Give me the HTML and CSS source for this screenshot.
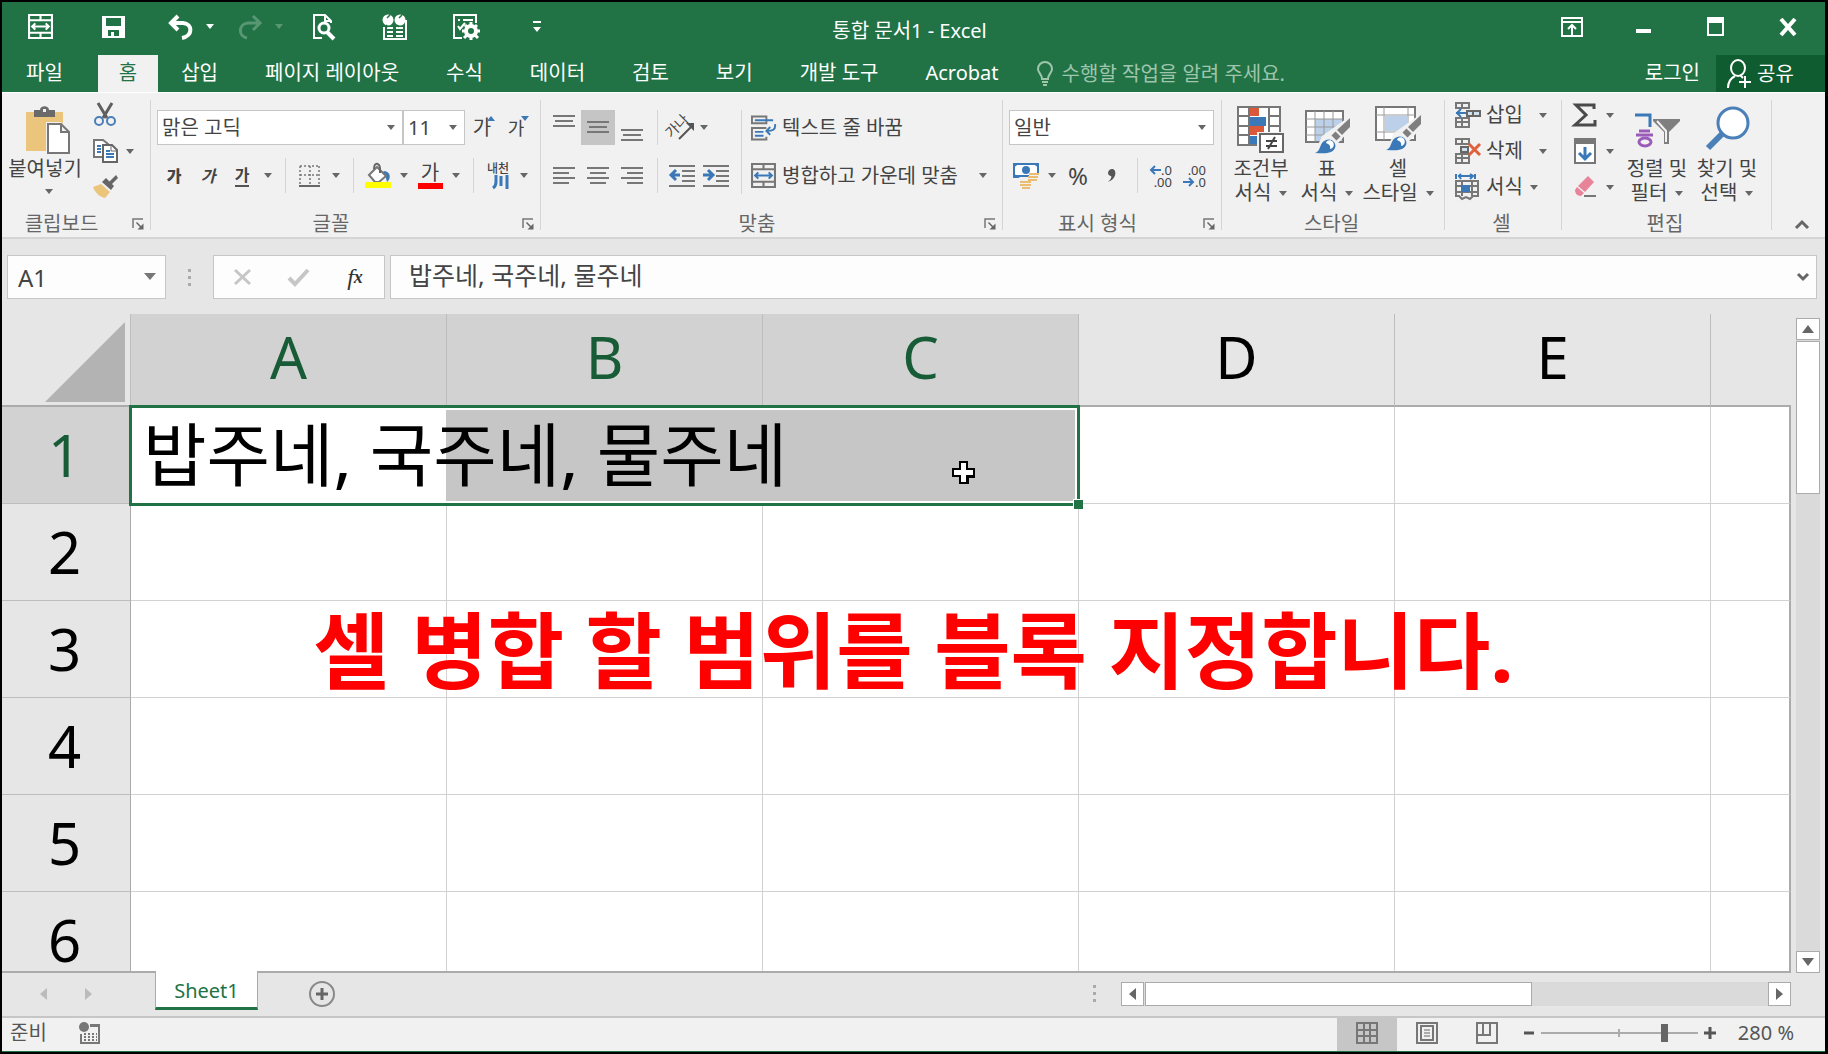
FILE: index.html
```html
<!DOCTYPE html>
<html lang="ko">
<head>
	<meta charset="utf-8">
	<title>통합 문서1 - Excel</title>
	<link rel="stylesheet" href="styles.css">
</head>
<body>

<svg class="defs" aria-hidden="true">
	<symbol id="merge" viewBox="0 0 24 24">
		<path class="line" d="M1 1h22v22H1zM1 6h22M1 18h22M12 1v5M12 18v5"/>
		<path class="accent" d="M4 12h16M7 9l-3 3 3 3M17 9l3 3-3 3"/>
	</symbol>
	<symbol id="launcher" viewBox="0 0 12 12">
		<path d="M1 10V1h10" fill="none" stroke="#777" stroke-width="1.5"/>
		<path d="M4.500 4.500l5 5" stroke="#666" stroke-width="1.500"/>
		<path d="M11.500 5.500v6h-6z" fill="#666"/>
	</symbol>
	<symbol id="brush" viewBox="0 0 36 36">
		<path d="M35 0v9l-8 8-5-5z" fill="#7f7f7f"/>
		<path d="M20.500 13.500l5 5-4 4-5-5z" fill="#7f7f7f"/>
		<path d="M0 35c5-2 4-5 7-10 3-4 9-5 12-1s1 8-3 10c-5 2-10 1-16 1z" fill="#3b78b8"/>
		<path d="M11 25c0-3 5-4 7-1s0 7-3 7c1-3-1-5-4-6z" fill="#fff"/>
	</symbol>
</svg>

<div class="window">

	<header class="titlebar">
		<div class="quick">
			<button class="q1" aria-label="병합하고 가운데 맞춤"><svg width="25" height="25"><use href="#merge"/></svg></button>
			<button class="q2" aria-label="저장"><svg width="23" height="22" viewBox="0 0 23 22"><path d="M0 0h23v22H0zM4 2v8h15V2zM6 14v6h3v-4h3v4h5v-6z" fill="#fff" fill-rule="evenodd"/></svg></button>
			<button class="q3" aria-label="실행 취소"><svg width="24" height="24" viewBox="0 0 24 24"><path d="M9 1L2 8l7 7M3 8h11c10 1 10 13-1 15" fill="none" stroke="#fff" stroke-width="4"/></svg><i class="caret"></i></button>
			<button class="q4" aria-label="다시 실행" disabled><svg width="24" height="24" viewBox="0 0 24 24"><path d="M15 1l7 7-7 7M21 8H10C0 9 0 21 9 23" fill="none" stroke="#fff" stroke-width="3"/></svg><i class="caret"></i></button>
			<button class="q5" aria-label="인쇄 미리 보기"><svg width="22" height="26" viewBox="0 0 22 26"><path d="M9 24H1V1h11l6 6v2M12 1v6h6" fill="none" stroke="#fff" stroke-width="2"/><circle cx="11" cy="14" r="5" fill="none" stroke="#fff" stroke-width="3"/><path d="M14 18l7 7" stroke="#fff" stroke-width="4"/></svg></button>
			<button class="q6" aria-label="찾기 및 확인"><svg width="26" height="26" viewBox="0 0 26 26"><path d="M2 13v12h22V6M5 14h6M14 14h7M5 18h6M14 18h7M5 22h6M14 22h7" fill="none" stroke="#fff" stroke-width="2"/><circle cx="6" cy="6" r="5.500" fill="#fff"/><circle cx="18" cy="6" r="5.500" fill="#fff"/><path d="M5 4l3-3M17 4l3-3M4 11l2 2M15 11l2 2" stroke="#217346" stroke-width="1.500"/></svg></button>
			<button class="q7" aria-label="옵션"><svg width="27" height="26" viewBox="0 0 27 26"><path d="M9 24H1V1h22v8M5 6h2M10 6h10M5 12l2 3 5-6" fill="none" stroke="#fff" stroke-width="2"/><circle cx="18" cy="17" r="5" fill="none" stroke="#fff" stroke-width="4"/><path d="M18 8v4M18 22v4M9 17h4M23 17h4M12 11l2 2M22 21l3 3M24 11l-2 2M14 21l-3 3" stroke="#fff" stroke-width="3"/></svg></button>
			<button class="q8" aria-label="빠른 실행 도구 모음 사용자 지정"><svg width="8" height="12" viewBox="0 0 8 12"><path d="M0 0h8v2H0zM0 6h8l-4 5z" fill="#fff"/></svg></button>
		</div>
		<h1>통합 문서1 - Excel</h1>
		<div class="controls">
			<button aria-label="리본 메뉴 표시 옵션"><svg width="22" height="20" viewBox="0 0 22 20"><path d="M1 1h20v18H1zM1 5h20M11 18V9M7 12l4-4 4 4" fill="none" stroke="#fff" stroke-width="2"/></svg></button>
			<button aria-label="최소화"><svg width="16" height="20" viewBox="0 0 16 20"><path d="M0 12h15v4H0z" fill="#fff"/></svg></button>
			<button aria-label="최대화"><svg width="18" height="20" viewBox="0 0 18 20"><path d="M1 1h15v17H1z" fill="none" stroke="#fff" stroke-width="2"/><path d="M0 0h17v6H0z" fill="#fff"/></svg></button>
			<button aria-label="닫기"><svg width="18" height="20" viewBox="0 0 18 20"><path d="M2 2l14 16M16 2L2 18" stroke="#fff" stroke-width="4"/></svg></button>
		</div>
	</header>

	<nav class="tabs">
		<a class="file" href="#">파일</a>
		<a class="active" href="#">홈</a>
		<a href="#">삽입</a>
		<a href="#">페이지 레이아웃</a>
		<a href="#">수식</a>
		<a href="#">데이터</a>
		<a href="#">검토</a>
		<a href="#">보기</a>
		<a href="#">개발 도구</a>
		<a href="#">Acrobat</a>
		<label class="tellme">
			<svg width="16" height="25" viewBox="0 0 16 25"><path d="M5 18c0-5-4-6-4-10a7 7 0 0 1 14 0c0 4-4 5-4 10zM5 21h6M6 24h4" fill="none" stroke="#9fc5ad" stroke-width="2"/></svg>
			<input type="text" placeholder="수행할 작업을 알려 주세요.">
		</label>
		<a class="login" href="#">로그인</a>
		<button class="share"><svg width="24" height="30" viewBox="0 0 24 30"><ellipse cx="11" cy="9" rx="7" ry="8" fill="none" stroke="#fff" stroke-width="2"/><path d="M1 29c0-6 3-10 7-12M13 16l3 3M18 17v12M12 23h12" fill="none" stroke="#fff" stroke-width="2"/></svg>공유</button>
	</nav>

	<div class="ribbon">

		<section class="group clipboard">
			<div class="body">
				<button class="big">
					<svg width="48" height="48" viewBox="0 0 48 48"><path d="M1 6h37v39H1z" fill="#ecc57c"/><path d="M9 4h6c0-5 9-5 9 0h6v7H9z" fill="#6a6a6a"/><path d="M18 3h3v3h-3z" fill="#f1f1f1"/><path d="M21 16h15l9 9v23H21z" fill="#f1f1f1"/><path d="M23 18h13l8 8v21H23zM36 18v8h8" fill="#fff" stroke="#777" stroke-width="2"/></svg>
					<span>붙여넣기</span>
					<i class="caret"></i>
				</button>
				<div class="stack">
					<button aria-label="잘라내기"><svg width="24" height="24" viewBox="0 0 24 24"><path d="M5 0l9 15M19 0l-9 15" stroke="#5f5f5f" stroke-width="3"/><circle cx="6" cy="18" r="4" fill="none" stroke="#4a7fb8" stroke-width="2"/><circle cx="18" cy="18" r="4" fill="none" stroke="#4a7fb8" stroke-width="2"/></svg></button>
					<button aria-label="복사"><svg width="26" height="24" viewBox="0 0 26 24"><path d="M1 1h9l5 4v13H1z" fill="#fff" stroke="#777" stroke-width="2"/><path d="M4 7h4M4 10h4M4 13h4" stroke="#3b78b8" stroke-width="2"/><path d="M10 6h9l5 5v12H10z" fill="#fff" stroke="#666" stroke-width="2"/><path d="M18 6v6h6" fill="none" stroke="#666"/><path d="M13 12h4M13 15h8M13 18h8" stroke="#3b78b8" stroke-width="2"/></svg><i class="caret"></i></button>
					<button aria-label="서식 복사"><svg width="26" height="24" viewBox="0 0 26 24"><path d="M0 12l8-3 9 8-5 6c-5-1-10-5-12-11z" fill="#ecc57c"/><path d="M9 7l4-4 8 8-3 4z" fill="#666"/><path d="M16 7l7-7 2 3-7 7z" fill="#666"/></svg></button>
				</div>
			</div>
			<footer><h2>클립보드</h2><button aria-label="클립보드 옵션"><svg width="12" height="12"><use href="#launcher"/></svg></button></footer>
		</section>

		<section class="group font">
			<div class="body rows">
				<div class="row">
					<label class="combo name"><select aria-label="글꼴"><option>맑은 고딕</option></select></label>
					<label class="combo size"><select aria-label="글꼴 크기"><option>11</option></select></label>
					<button class="tool grow" aria-label="글꼴 크기 크게">가<i class="up"></i></button>
					<button class="tool grow small" aria-label="글꼴 크기 작게">가<i class="down"></i></button>
				</div>
				<div class="row">
					<button class="tool bold">가</button>
					<button class="tool italic">가</button>
					<button class="tool underline"><span>가</span></button>
					<button class="drop" aria-label="밑줄 옵션"><i class="caret"></i></button>
					<i class="sep"></i>
					<button class="tool" aria-label="테두리"><svg width="22" height="22" viewBox="0 0 22 22"><path d="M1 1h20M1 10h20M1 1v18M11 1v18M20 1v18" fill="none" stroke="#777" stroke-width="1.500" stroke-dasharray="2 2"/><path d="M0 21h21" stroke="#666" stroke-width="2"/></svg></button>
					<button class="drop" aria-label="테두리 옵션"><i class="caret"></i></button>
					<i class="sep"></i>
					<button class="tool" aria-label="채우기 색"><svg width="26" height="26" viewBox="0 0 26 26"><path d="M20 8c7 2 5 9 2 11-1-4-2-8-5-10z" fill="#3b78b8"/><path d="M4 12l8-8 9 9-7 6h-4z" fill="#fff" stroke="#777" stroke-width="2"/><path d="M9 6c0-8 6-6 6 0v4" fill="none" stroke="#666" stroke-width="2"/><path d="M0 19h26v6H0z" fill="#ff0"/></svg></button>
					<button class="drop" aria-label="채우기 색 옵션"><i class="caret"></i></button>
					<button class="tool color" aria-label="글꼴 색"><span>가</span></button>
					<button class="drop" aria-label="글꼴 색 옵션"><i class="caret"></i></button>
					<i class="sep"></i>
					<button class="tool hanja" aria-label="윗주 필드 표시"><span>내천</span><svg width="16" height="14" viewBox="0 0 16 14"><path d="M3 0v7q0 4-3 6M8 1v10M14 0v14" fill="none" stroke="#3b78b8" stroke-width="3"/></svg></button>
					<button class="drop" aria-label="윗주 옵션"><i class="caret"></i></button>
				</div>
			</div>
			<footer><h2>글꼴</h2><button aria-label="글꼴 옵션"><svg width="12" height="12"><use href="#launcher"/></svg></button></footer>
		</section>

		<section class="group align">
			<div class="body">
				<div class="rows">
					<div class="row">
						<button class="tool" aria-label="위쪽 맞춤"><svg width="22" height="26" viewBox="0 0 22 26"><path class="line" d="M0 1h22M2 6h18M0 11h22"/></svg></button>
						<button class="tool on" aria-label="가운데 맞춤"><svg width="22" height="26" viewBox="0 0 22 26"><path class="line" d="M0 7h22M2 12h18M0 17h22"/></svg></button>
						<button class="tool" aria-label="아래쪽 맞춤"><svg width="22" height="26" viewBox="0 0 22 26"><path class="line" d="M0 15h22M2 20h18M0 25h22"/></svg></button>
						<i class="sep"></i>
						<button class="tool orient" aria-label="방향"><span>가나</span><svg width="26" height="26" viewBox="0 0 26 26"><path d="M10 24L24 10" stroke="#555" stroke-width="2"/><path d="M25 8v8l-8-8z" fill="#555"/></svg></button>
						<button class="drop tight" aria-label="방향 옵션"><i class="caret"></i></button>
					</div>
					<div class="row">
						<button class="tool" aria-label="왼쪽 맞춤"><svg width="22" height="18" viewBox="0 0 22 18"><path class="line" d="M0 1h22M0 6h16M0 11h22M0 16h16"/></svg></button>
						<button class="tool" aria-label="가운데"><svg width="22" height="18" viewBox="0 0 22 18"><path class="line" d="M0 1h22M3 6h16M0 11h22M3 16h16"/></svg></button>
						<button class="tool" aria-label="오른쪽 맞춤"><svg width="22" height="18" viewBox="0 0 22 18"><path class="line" d="M0 1h22M6 6h16M0 11h22M6 16h16"/></svg></button>
						<i class="sep"></i>
						<button class="tool" aria-label="내어쓰기"><svg width="26" height="22" viewBox="0 0 26 22"><path class="line" d="M0 1h26M13 6h13M13 11h13M13 16h13M0 21h26"/><path d="M2 10h9M7 5l-5 5 5 5" fill="none" stroke="#3b78b8" stroke-width="3"/></svg></button>
						<button class="tool" aria-label="들여쓰기"><svg width="26" height="22" viewBox="0 0 26 22"><path class="line" d="M0 1h26M13 6h13M13 11h13M13 16h13M0 21h26"/><path d="M0 10h9M5 5l5 5-5 5" fill="none" stroke="#3b78b8" stroke-width="3"/></svg></button>
					</div>
				</div>
				<i class="sep tall"></i>
				<div class="rows wide">
					<div class="row">
						<button class="labelled"><svg width="25" height="26" viewBox="0 0 26 26"><path class="line" d="M1 1h15v7H1zM16 13H1v12h15v-3"/><path class="accent" d="M4 5h19M4 17h9M4 21h9M25 9c1 6-3 7-8 7M20 12l-4 4 4 4"/></svg>텍스트 줄 바꿈</button>
					</div>
					<div class="row">
						<button class="labelled"><svg width="25" height="25"><use href="#merge"/></svg>병합하고 가운데 맞춤</button>
						<button class="drop last" aria-label="병합 옵션"><i class="caret"></i></button>
					</div>
				</div>
			</div>
			<footer><h2>맞춤</h2><button aria-label="맞춤 옵션"><svg width="12" height="12"><use href="#launcher"/></svg></button></footer>
		</section>

		<section class="group number">
			<div class="body rows">
				<div class="row">
					<label class="combo format"><select aria-label="표시 형식"><option>일반</option></select></label>
				</div>
				<div class="row">
					<button class="tool" aria-label="회계 표시 형식"><svg width="26" height="26" viewBox="0 0 26 26"><path d="M1 1h24v12H1z" fill="#fff" stroke="#3b78b8" stroke-width="2"/><path d="M0 0h7L0 5zM26 0h-7l7 5zM0 15h7l-7-5z" fill="#3b78b8"/><circle cx="13" cy="7" r="4" fill="#3b78b8"/><path d="M16 11h10v5H16zM7 18h10v5H7z" fill="#f1f1f1"/><path d="M16 11h10M15 14h10M15 17h9M7 19h11M7 22h11M9 25h8" stroke="#ecbd70" stroke-width="2"/></svg></button>
					<button class="drop" aria-label="회계 옵션"><i class="caret"></i></button>
					<button class="tool percent">%</button>
					<button class="tool comma" aria-label="쉼표 스타일"><svg width="8" height="14" viewBox="0 0 8 14"><path d="M4 0c5 0 5 10-4 13 3-3 4-5 3-6-5-1-3-7 1-7z" fill="#555"/></svg></button>
					<i class="sep"></i>
					<button class="tool decimal" aria-label="자릿수 늘림"><span><svg width="12" height="10" viewBox="0 0 12 10"><path d="M2 5h10M6 1L2 5l4 4" fill="none" stroke="#3b78b8" stroke-width="2"/></svg>.0</span><span>.00</span></button>
					<button class="tool decimal" aria-label="자릿수 줄임"><span>.00</span><span><svg width="12" height="10" viewBox="0 0 12 10"><path d="M0 5h10M6 1l4 4-4 4" fill="none" stroke="#3b78b8" stroke-width="2"/></svg>.0</span></button>
				</div>
			</div>
			<footer><h2>표시 형식</h2><button aria-label="표시 형식 옵션"><svg width="12" height="12"><use href="#launcher"/></svg></button></footer>
		</section>

		<section class="group styles">
			<div class="body">
				<button class="big">
					<svg width="48" height="48" viewBox="0 0 48 48"><path d="M1 1h42v38H1z" fill="#fff"/><path d="M13 1h9v9h-9zM13 20h14v9H13z" fill="#d9593a"/><path d="M13 11h16v9H13zM13 30h10v9H13z" fill="#3b78b8"/><path d="M1 1h42v38H1zM12 1v38M32 1v38M1 10h11M1 20h11M1 29h11M32 10h11M32 20h11" class="line"/><path d="M20 26h28v22H20z" fill="#f1f1f1"/><path d="M23 28h23v18H23z" fill="#fff" stroke="#666" stroke-width="2"/><path d="M29 35h11M29 40h11M38 31l-7 12" stroke="#444" stroke-width="2"/></svg>
					<span>조건부</span>
					<span>서식<i class="caret"></i></span>
				</button>
				<button class="big">
					<svg width="48" height="48" viewBox="0 0 48 48"><path d="M3 5h37v31H3z" fill="#fff"/><path d="M12 13h28v23H12z" fill="#bdd0e9"/><path d="M3 5h37v31H3z" class="line"/><path d="M12 5v31M21 5v31M30 5v31M3 13h37M3 21h37M3 29h37" fill="none" stroke="#999"/><path d="M11 48l8-18 28-20v14L26 47z" fill="#f1f1f1"/><use href="#brush" x="12" y="12" width="36" height="36"/></svg>
					<span>표</span>
					<span>서식<i class="caret"></i></span>
				</button>
				<button class="big">
					<svg width="48" height="48" viewBox="0 0 48 48"><path d="M2 1h39v33H2z" fill="#fff"/><path d="M11 10h22v15H11z" fill="#bdd0e9"/><path d="M2 1h39v33H2z" class="line"/><path d="M10 1v33M34 1v33M2 9h39M2 26h39" fill="none" stroke="#999"/><path d="M12 45l8-18 28-20v14L27 44z" fill="#f1f1f1"/><use href="#brush" x="12" y="9" width="36" height="36"/></svg>
					<span>셀</span>
					<span>스타일<i class="caret"></i></span>
				</button>
			</div>
			<footer><h2>스타일</h2></footer>
		</section>

		<section class="group cells">
			<div class="body stack">
				<button><svg width="26" height="26" viewBox="0 0 26 26"><path d="M1 1h13v5H1zM7 1v5M1 16h13v9H1zM1 20h13M7 16v9" class="line"/><path d="M12 9h13v5H12zM18 9v5" fill="#cfe0f0" stroke="#666" stroke-width="2"/><path d="M1 11h10M6 7l-4 4 4 4" class="accent"/></svg><span>삽입</span><i class="caret"></i></button>
				<button><svg width="26" height="26" viewBox="0 0 26 26"><path d="M1 1h13v5H1zM7 1v5M1 16h13v9H1zM1 20h13M7 16v9" class="line"/><path d="M6 9h7v5H6z" fill="#cfe0f0" stroke="#666" stroke-width="2"/><path d="M14 6l11 11M25 6L14 17" stroke="#e0603c" stroke-width="3"/></svg><span>삭제</span><i class="caret"></i></button>
				<button><svg width="26" height="26" viewBox="0 0 26 26"><path d="M1 0v5M20 0v5M3 2h15M6 0L4 2l2 3M15 0l3 2-3 3" class="accent"/><path d="M1 7h22v15h-5l-3 3-4-2-4 2-3-3H1zM1 12h22M1 18h22M7 7v15M17 7v15" class="line"/><path d="M6 11h9v7H6z" fill="#3b78b8"/></svg><span>서식</span><i class="caret near"></i></button>
			</div>
			<footer><h2>셀</h2></footer>
		</section>

		<section class="group edit">
			<div class="body">
				<div class="stack">
					<button aria-label="자동 합계"><svg width="24" height="24" viewBox="0 0 24 24"><path d="M21 6V2H3l10 10L2 22h20v-5" fill="none" stroke="#4a4a4a" stroke-width="3"/></svg><i class="caret"></i></button>
					<button aria-label="채우기"><svg width="24" height="26" viewBox="0 0 24 26"><path d="M2 1h20v24H2z" fill="#fff" stroke="#777" stroke-width="2"/><path d="M1 0h22v6H1z" fill="#777"/><path d="M12 9v12M6 15l6 6 6-6" fill="none" stroke="#3b78b8" stroke-width="3"/></svg><i class="caret"></i></button>
					<button aria-label="지우기"><svg width="24" height="24" viewBox="0 0 24 24"><path d="M15 1l6 6-9 10-7-6z" fill="#e8849a"/><path d="M4 12l7 6-3 3c-4 0-6-3-6-6z" fill="#e8849a"/><path d="M11 21h12" stroke="#777" stroke-width="2"/></svg><i class="caret"></i></button>
				</div>
				<button class="big">
					<svg width="48" height="48" viewBox="0 0 48 48"><path d="M2 9h15v12" fill="none" stroke="#3b78b8" stroke-width="3"/><path d="M6 25h11M3 29h17" stroke="#9a5cb8" stroke-width="3"/><ellipse cx="12" cy="36" rx="6" ry="4" fill="none" stroke="#9a5cb8" stroke-width="3"/><path d="M20 13h27v2L36 26v12h-5V26L20 15z" fill="#7f7f7f"/><path d="M24 15l9 10v11" fill="none" stroke="#f1f1f1" stroke-width="2"/></svg>
					<span>정렬 및</span>
					<span>필터<i class="caret"></i></span>
				</button>
				<button class="big">
					<svg width="48" height="48" viewBox="0 0 48 48"><path d="M19 28L5 42" stroke="#4a7fb8" stroke-width="6"/><circle cx="30" cy="17" r="15" fill="#fff" stroke="#4a7fb8" stroke-width="3"/></svg>
					<span>찾기 및</span>
					<span>선택<i class="caret"></i></span>
				</button>
			</div>
			<footer><h2>편집</h2></footer>
		</section>

		<button class="collapse" aria-label="리본 메뉴 축소"><svg width="16" height="10" viewBox="0 0 16 10"><path d="M2 9l6-6 6 6" fill="none" stroke="#666" stroke-width="3"/></svg></button>
	</div>

	<div class="formulabar">
		<label class="namebox"><input type="text" value="A1" aria-label="이름 상자"></label>
		<i class="grip"></i>
		<div class="fx">
			<button aria-label="취소"><svg width="18" height="16" viewBox="0 0 18 16"><path d="M1 1l15 14M16 1L1 15" stroke="#c6c6c6" stroke-width="3"/></svg></button>
			<button aria-label="입력"><svg width="22" height="18" viewBox="0 0 22 18"><path d="M1 10l6 6L20 2" fill="none" stroke="#c6c6c6" stroke-width="4"/></svg></button>
			<button class="func" aria-label="함수 삽입">f<sub>x</sub></button>
		</div>
		<div class="formula">
			<input type="text" value="밥주네, 국주네, 물주네" aria-label="수식 입력줄">
			<button aria-label="수식 입력줄 확장"><svg width="14" height="10" viewBox="0 0 14 10"><path d="M2 2l5 5 5-5" fill="none" stroke="#666" stroke-width="3"/></svg></button>
		</div>
	</div>

	<main class="workspace">
		<div class="sheet">
			<table>
				<colgroup><col class="rowhead"><col class="cell"><col class="cell"><col class="cell"><col class="cell"><col class="cell"><col></colgroup>
				<thead>
					<tr>
						<th class="corner"><svg width="80" height="80" viewBox="0 0 80 80"><path d="M80 0v80H0z" fill="#b3b3b3"/></svg></th>
						<th class="sel">A</th><th class="sel">B</th><th class="sel">C</th><th>D</th><th>E</th><th></th>
					</tr>
				</thead>
				<tbody>
					<tr>
						<th class="sel">1</th>
						<td class="current"><span class="text">밥주네, 국주네, 물주네</span><i class="range"></i></td>
						<td></td><td></td><td></td><td></td><td></td>
					</tr>
					<tr><th>2</th><td></td><td></td><td></td><td></td><td></td><td></td></tr>
					<tr><th>3</th><td></td><td></td><td></td><td></td><td></td><td></td></tr>
					<tr><th>4</th><td></td><td></td><td></td><td></td><td></td><td></td></tr>
					<tr><th>5</th><td></td><td></td><td></td><td></td><td></td><td></td></tr>
					<tr><th>6</th><td></td><td></td><td></td><td></td><td></td><td></td></tr>
				</tbody>
			</table>
		</div>
		<div class="vscroll">
			<button aria-label="위로"><i class="tri up"></i></button>
			<div class="track"><div class="thumb"></div></div>
			<button aria-label="아래로"><i class="tri down"></i></button>
		</div>
		<svg class="pointer" width="26" height="26" viewBox="0 0 26 26"><path d="M9 2h7v7h7v7h-7v7H9v-7H2V9h7z" fill="#fff" stroke="#000" stroke-width="2"/><path d="M17 24v-7h7" fill="none" stroke="#000" stroke-width="2"/></svg>
		<p class="caption">셀 병합 할 범위를 블록 지정합니다.</p>
	</main>

	<div class="sheettabs">
		<button class="nav" aria-label="이전 시트"><i class="tri left"></i></button>
		<button class="nav" aria-label="다음 시트"><i class="tri right"></i></button>
		<a class="tab" href="#">Sheet1</a>
		<button class="add" aria-label="새 시트"><svg width="26" height="26" viewBox="0 0 26 26"><circle cx="13" cy="13" r="12" fill="none" stroke="#888" stroke-width="2"/><path d="M13 7v12M7 13h12" stroke="#666" stroke-width="3"/></svg></button>
		<i class="grip"></i>
		<div class="hscroll">
			<button aria-label="왼쪽"><i class="tri left"></i></button>
			<div class="track"><div class="thumb"></div></div>
			<button aria-label="오른쪽"><i class="tri right"></i></button>
		</div>
	</div>

	<footer class="status">
		<span>준비</span>
		<button class="macro" aria-label="매크로 기록"><svg width="22" height="22" viewBox="0 0 22 22"><circle cx="5" cy="5" r="5" fill="#777"/><path d="M11 2h10v3H11z" fill="#777"/><path d="M2 12v9h18V2" fill="none" stroke="#777" stroke-width="2"/><path d="M5 12h13M5 15h13M5 18h13" stroke="#777" stroke-width="2" stroke-dasharray="2 2"/></svg></button>
		<div class="views">
			<button class="on" aria-label="기본"><svg width="22" height="22" viewBox="0 0 22 22"><path class="line" d="M1 1h20v20H1zM8 1v20M14 1v20M1 8h20M1 14h20"/></svg></button>
			<button aria-label="페이지 레이아웃"><svg width="22" height="22" viewBox="0 0 22 22"><path class="line" d="M1 1h20v20H1zM5 4h12v14H5z"/><path d="M8 8h6M8 11h6M8 14h6" stroke="#666"/></svg></button>
			<button aria-label="페이지 나누기 미리 보기"><svg width="22" height="22" viewBox="0 0 22 22"><path class="line" d="M1 1h20v20H1zM1 13h13V1M7 1v12"/></svg></button>
		</div>
		<div class="zoom">
			<button aria-label="축소"><svg width="12" height="12" viewBox="0 0 12 12"><path d="M1 6h10" stroke="#555" stroke-width="3"/></svg></button>
			<input type="range" min="0" max="100" value="80" aria-label="확대/축소">
			<button aria-label="확대"><svg width="12" height="12" viewBox="0 0 12 12"><path d="M0 6h12M6 0v12" stroke="#555" stroke-width="3"/></svg></button>
			<span>280 %</span>
		</div>
	</footer>

</div>

</body>
</html>
```

FILE: styles.css
```css
* { box-sizing: border-box; }

body {
	margin: 0;
	background: #000;
	font: 20px/24px "Noto Sans", "Noto Sans CJK KR", sans-serif;
	color: #444;
}
h1, h2, p { margin: 0; font-weight: normal; }
button, input, select { font: inherit; color: inherit; margin: 0; padding: 0; }
button { display: flex; align-items: center; justify-content: center; border: 0; background: none; white-space: nowrap; }
a { color: inherit; text-decoration: none; }
svg { display: block; flex: none; overflow: visible; }

.defs { position: absolute; width: 0; height: 0; }
.line { fill: none; stroke: #777; stroke-width: 2; }
.accent { fill: none; stroke: #3b78b8; stroke-width: 2; }

.caret {
	flex: none;
	border: 4px solid transparent;
	border-top: 5px solid #666;
	border-bottom: 0;
}
.tri { border: 6px solid transparent; }
.tri.up { border-top: 0; border-bottom: 8px solid #666; }
.tri.down { border-bottom: 0; border-top: 8px solid #666; }
.tri.left { border-left: 0; border-right: 7px solid #666; }
.tri.right { border-right: 0; border-left: 7px solid #666; }

.window {
	display: flex;
	flex-direction: column;
	height: 100vh;
	border: 2px solid #000;
	border-right-width: 3px;
	background: #e6e6e6;
}

/* title bar */
.titlebar {
	display: grid;
	grid-template-columns: 1fr auto 1fr;
	align-items: center;
	height: 53px;
	flex: none;
	background: #217346;
	color: #fff;
}
.quick { display: flex; align-items: center; padding: 0 0 4px 26px; }
.quick button { justify-content: flex-start; flex: none; }
.quick .caret { border-top-color: #fff; margin-left: 13px; }
.q1 { width: 74px; filter: brightness(0) invert(1); }
.q2 { width: 67px; }
.q3 { width: 69px; }
.q4 { width: 75px; opacity: .25; }
.q5 { width: 69px; }
.q6 { width: 71px; }
.q7 { width: 80px; }
.titlebar h1 { font-size: 20px; padding: 4px 8px 0 0; }
.controls { display: flex; justify-content: flex-end; padding: 0 1px 4px 0; }
.controls button { width: 72px; }

/* tabs */
.tabs {
	display: flex;
	height: 37px;
	flex: none;
	background: #217346;
	color: #fff;
}
.tabs a { padding: 6px 24px 0 23px; white-space: nowrap; }
.tabs .file { padding: 6px 35px 0 24px; }
.tabs .active { padding: 6px 21px 0; background: #f1f1f1; color: #217346; }
.tellme { display: flex; align-items: center; flex: 1; gap: 9px; padding-left: 14px; }
.tellme input { flex: 1; min-width: 0; border: 0; background: none; outline: 0; }
.tellme input::placeholder { color: #9fc5ad; opacity: 1; }
.tabs .login { padding: 6px 16px 0; }
.share { width: 109px; background: #0e5c2f; gap: 6px; justify-content: flex-start; padding-left: 11px; }

/* ribbon */
.ribbon {
	display: flex;
	flex: none;
	height: 147px;
	padding: 7px 0;
	background: #f1f1f1;
	border-top: 1px solid #fff;
	border-bottom: 2px solid #d5d5d5;
}
.group { display: flex; flex-direction: column; flex: none; border-right: 1px solid #d5d5d5; }
.group .body { display: flex; flex: 1; align-items: flex-start; }
.group footer { display: flex; align-items: flex-end; height: 20px; padding-right: 3px; color: #666; }
.group h2 { flex: 1; text-align: center; font-size: 20px; line-height: 12px; }
.group h2:not(:last-child) { padding-right: 8px; }
.group footer button { width: 18px; }
.clipboard { width: 149px; }
.font { width: 390px; }
.align { width: 462px; }
.number { width: 219px; }
.styles { width: 223px; }
.cells { width: 117px; }
.edit { width: 210px; }

.font .body, .align .body, .number .body { padding: 10px 0 0 6px; }
.group .rows { display: flex; flex-direction: column; align-items: stretch; gap: 13px; }
.row { display: flex; align-items: center; height: 35px; }
.wide { flex: 1; padding: 0 10px 0 2px; }

.tool { width: 34px; height: 35px; flex: none; position: relative; }
.tool.on { background: #c5c5c5; }
.drop { width: 18px; height: 35px; flex: none; }
.drop.tight { width: 10px; }
.drop.last { margin-left: auto; }
.sep { width: 16px; height: 35px; flex: none; background: linear-gradient(#d5d5d5, #d5d5d5) center / 1px 100% no-repeat; }
.sep.tall { height: 84px; }
.labelled { gap: 6px; }

.combo { position: relative; height: 35px; flex: none; }
.combo select {
	width: 100%;
	height: 100%;
	padding-left: 4px;
	border: 1px solid #c6c6c6;
	border-radius: 0;
	background: #fff;
	appearance: none;
}
.combo::after {
	content: "";
	position: absolute;
	right: 8px;
	top: 15px;
	border: 4px solid transparent;
	border-top: 5px solid #666;
	border-bottom: 0;
	pointer-events: none;
}
.combo.name { width: 246px; }
.combo.size { width: 62px; }
.combo.format { width: 205px; }

.grow { font-size: 20px; }
.grow.small { font-size: 18px; }
.grow .up, .grow .down { position: absolute; top: 6px; right: 4px; border: 4px solid transparent; }
.grow .up { border-top: 0; border-bottom: 5px solid #3b78b8; }
.grow .down { border-bottom: 0; border-top: 5px solid #3b78b8; }
.bold { font-size: 16px; font-weight: 900; }
.italic { font-size: 16px; font-style: italic; font-weight: 700; }
.underline { font-size: 16px; font-weight: 700; }
.underline span { border-bottom: 2px solid #555; line-height: 20px; }
.color span { width: 25px; border-bottom: 6px solid #f00; line-height: 20px; }
.hanja { flex-direction: column; font-size: 12px; line-height: 12px; font-weight: 500; }
.hanja svg { margin-left: 6px; }
.orient span { position: absolute; left: -1px; top: 8px; font-size: 14px; line-height: 16px; transform: rotate(-45deg); }
.percent { font-size: 24px; }
.decimal { flex-direction: column; font-size: 13px; line-height: 12px; align-items: flex-end; padding-right: 7px; }
.decimal span { display: flex; align-items: center; }

.big { flex-direction: column; justify-content: flex-start; padding-top: 6px; }
.big svg { margin-bottom: 3px; }
.big span { display: flex; align-items: center; gap: 8px; line-height: 24px; }
.clipboard .big { width: 86px; }
.clipboard .big svg, .clipboard .big .caret { margin-left: 8px; }
.clipboard .big .caret { margin-top: 8px; }
.styles .body { padding-left: 2px; }
.styles .big { width: 84px; }
.styles .big:first-child { width: 74px; }
.styles .big:nth-child(2) { width: 58px; }
.edit .big { width: 70px; }

.stack button { height: 36px; justify-content: flex-start; }
.clipboard .stack { padding-left: 5px; }
.clipboard .stack .caret { margin-left: 7px; }
.group .stack { display: flex; flex-direction: column; margin-top: -3px; }
.cells .stack { padding-left: 10px; margin-bottom: 3px; }
.cells .stack span { margin: 0 16px 0 5px; }
.cells .caret.near { margin-left: -9px; }
.edit .stack { padding: 0 5px 0 11px; width: 60px; }
.edit .stack .caret { margin-left: 9px; }
.collapse { align-self: flex-end; margin: 0 15px 1px auto; }

/* formula bar */
.formulabar { display: flex; flex: none; height: 75px; padding: 16px 8px 15px 5px; font-size: 24px; }
.formulabar > label, .fx, .formula { border: 1px solid #c6c6c6; background: #fdfdfd; }
.formulabar input { border: 0; background: none; outline: 0; min-width: 0; }
.namebox { position: relative; width: 159px; padding-left: 10px; }
.namebox input { width: 100px; height: 100%; }
.namebox::after {
	content: "";
	position: absolute;
	right: 9px;
	top: 17px;
	border: 6px solid transparent;
	border-top: 7px solid #777;
	border-bottom: 0;
}
.grip {
	width: 3px;
	height: 17px;
	background: repeating-linear-gradient(#aaa 0 3px, transparent 3px 7px);
}
.formulabar .grip { margin: 14px 22px 0; }
.fx { display: flex; align-items: center; width: 172px; padding: 0 0 0 1px; }
.fx button { width: 56px; }
.func { font-family: "Liberation Serif", serif; font-style: italic; color: #333; }
.func sub { font-size: 18px; font-weight: bold; }
.formula { display: flex; flex: 1; margin-left: 5px; padding: 0 6px 0 18px; }
.formula input { flex: 1; font-size: 25px; padding-bottom: 6px; }

/* grid */
.workspace { position: relative; display: flex; flex: 1; min-height: 0; }
.sheet { flex: 1; overflow: hidden; border-bottom: 2px solid #ababab; }
.sheet table { width: 100%; table-layout: fixed; border-spacing: 0; }
.rowhead { width: 129px; }
.cell { width: 316px; }
.sheet th {
	height: 97px;
	padding: 0 3px 0 0;
	border-right: 1px solid #ababab;
	border-bottom: 1px solid #bdbdbd;
	font: 400 58px/78px "Noto Sans", sans-serif;
	color: #000;
}
.sheet thead th { height: 93px; padding: 0 0 6px; border-bottom: 2px solid #ababab; border-right-color: #bdbdbd; }
.sheet thead th:last-child { border-right: 0; }
.sheet th.sel { background: #d2d2d2; color: #185c37; }
.sheet thead .corner { padding: 0; }
.sheet thead .corner svg { margin: 4px 0 0 43px; }
.sheet td { padding: 0; background: #fff; border-right: 1px solid #d2d2d2; border-bottom: 1px solid #d2d2d2; }
.sheet td:last-child { border-right: 2px solid #ababab; }
.sheet .current { position: relative; }
.current .text {
	position: absolute;
	z-index: 2;
	left: 12px;
	top: 0;
	font-size: 69px;
	line-height: 94px;
	white-space: nowrap;
	color: #000;
}
.range {
	position: absolute;
	z-index: 1;
	left: -2px;
	top: -2px;
	width: calc(300% + 6px);
	height: 101px;
	padding: 2px;
	border: 3px solid #217346;
	background: linear-gradient(#c6c6c6, #c6c6c6) right / 629px 100% no-repeat content-box, #fff;
}
.range::after {
	content: "";
	position: absolute;
	right: -6px;
	bottom: -6px;
	width: 9px;
	height: 9px;
	background: #217346;
	border: solid #fff;
	border-width: 1px 0 0 1px;
}
.pointer { position: absolute; z-index: 3; left: 949px; top: 146px; }
.caption {
	position: absolute;
	z-index: 3;
	left: 0;
	right: 0;
	top: 288px;
	text-align: center;
	font: bold 83px/96px "Noto Sans", "Noto Sans CJK KR", sans-serif;
	color: #f00;
}

.vscroll { display: flex; flex-direction: column; width: 34px; padding: 4px 5px 0; }
.vscroll button, .hscroll button, .thumb { background: #fff; border: 1px solid #ababab; flex: none; }
.vscroll button { height: 22px; }
.track { flex: 1; background: #dadada; }
.vscroll .thumb { height: 25%; margin-top: 1px; }

/* sheet tabs */
.sheettabs { display: flex; flex: none; height: 45px; align-items: center; padding-bottom: 2px; border-bottom: 2px solid #c6c6c6; }
.nav { width: 45px; }
.nav:first-child { margin-left: 19px; }
.nav .left { border-right-color: #bbb; }
.nav .right { border-left-color: #bbb; }
.tab {
	align-self: flex-start;
	width: 103px;
	height: 39px;
	margin: -2px 0 0 44px;
	padding-top: 8px;
	border: 1px solid #ababab;
	border-width: 0 1px;
	border-bottom: 3px solid #217346;
	background: #fff;
	color: #217346;
	text-align: center;
	z-index: 1;
}
.add { margin-left: 51px; }
.sheettabs .grip { margin-left: auto; margin-right: 25px; }
.hscroll { display: flex; width: 670px; height: 24px; margin-right: 34px; }
.hscroll button { width: 23px; }
.hscroll .thumb { width: 62%; height: 100%; margin-left: 1px; }

/* status bar */
.status {
	display: flex;
	flex: none;
	height: 34px;
	align-items: center;
	padding: 0 0 4px 8px;
	background: #f1f1f1;
	border-bottom: 1px solid #217346;
	color: #555;
}
.macro { margin-left: 32px; }
.views { display: flex; align-self: stretch; margin: 0 6px -4px auto; }
.views button { width: 60px; padding-bottom: 4px; }
.views .on { background: #c6c6c6; }
.zoom { display: flex; align-items: center; margin-right: 31px; }
.zoom span { margin-left: 22px; }
.zoom input {
	width: 157px;
	height: 20px;
	margin: 0 6px;
	appearance: none;
	background:
		linear-gradient(#ababab, #ababab) center / 100% 2px no-repeat,
		linear-gradient(#ababab, #ababab) center / 2px 8px no-repeat;
}
.zoom input::-webkit-slider-thumb { appearance: none; width: 7px; height: 18px; background: #666; }
```
